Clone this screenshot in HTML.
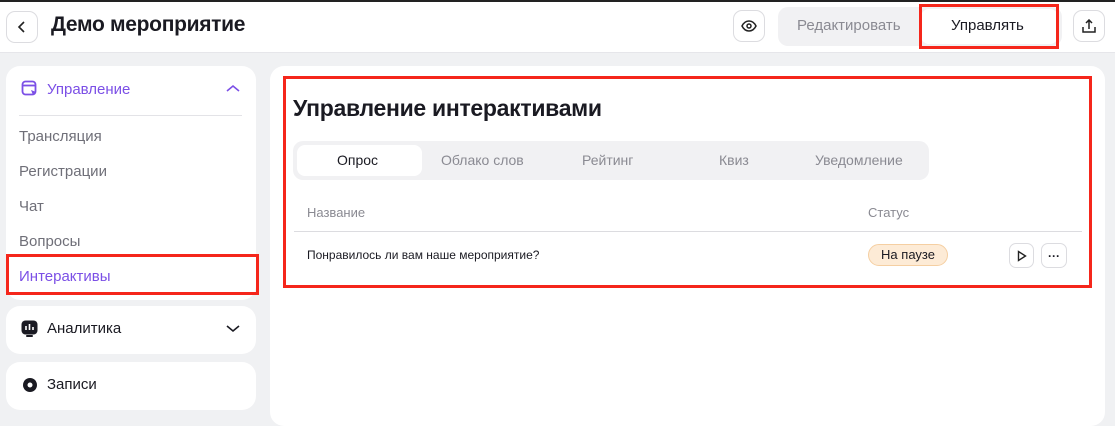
<!DOCTYPE html><html><head><meta charset="utf-8"><style>
*{box-sizing:border-box;margin:0;padding:0}
body{width:1115px;height:413px;overflow:hidden;background:#f0f1f3;font-family:"Liberation Sans",sans-serif;position:relative;color:#1a1a22}
.abs{position:absolute}
.top{left:0;top:0;width:1115px;height:2px;background:#222}
.hdr{left:0;top:2px;width:1115px;height:51px;background:#fff;border-bottom:1px solid #e6e6ea}
.btn{border:1px solid #dcdce0;border-radius:9px;background:#fff;display:flex;align-items:center;justify-content:center}
.card{background:#fff;border-radius:14px}
.red{border:3px solid #f5261b}
.item{left:19px;font-size:15px;color:#6f6f78}
</style></head><body>
<div class="abs top"></div>
<div class="abs hdr"></div>
<div class="abs btn" style="left:6px;top:11px;width:32px;height:32px"><svg width="14" height="14" viewBox="0 0 14 14"><path d="M9 2L4 7l5 5" fill="none" stroke="#222" stroke-width="1.6"/></svg></div>
<div class="abs" style="left:51px;top:13px;font-size:21px;font-weight:bold;letter-spacing:-0.3px">Демо мероприятие</div>
<div class="abs btn" style="left:733px;top:10px;width:32px;height:32px"><svg width="16" height="12" viewBox="0 0 16 12"><path d="M1 6C3 2 5.5 1 8 1s5 1 7 5c-2 4-4.5 5-7 5S3 10 1 6z" fill="none" stroke="#222" stroke-width="1.5"/><circle cx="8" cy="6" r="2" fill="none" stroke="#222" stroke-width="1.5"/></svg></div>
<div class="abs" style="left:778px;top:7px;width:284px;height:39px;background:#f1f1f3;border-radius:10px"></div>
<div class="abs" style="left:797px;top:17px;font-size:15px;color:#8a8a92">Редактировать</div>
<div class="abs" style="left:921px;top:9px;width:137px;height:35px;background:#fff;border-radius:8px"></div>
<div class="abs red" style="left:919px;top:4px;width:140px;height:45px"></div>
<div class="abs" style="left:951px;top:17px;font-size:15px;color:#1a1a22">Управлять</div>
<div class="abs btn" style="left:1073px;top:10px;width:32px;height:32px"><svg width="14" height="15" viewBox="0 0 14 15"><path d="M7 10V1M4 4l3-3 3 3M1 8v5h12V8" fill="none" stroke="#222" stroke-width="1.5"/></svg></div>

<div class="abs card" style="left:6px;top:66px;width:250px;height:234px"></div>
<svg class="abs" style="left:21px;top:80px" width="17" height="17" viewBox="0 0 17 17"><rect x="1.5" y="1.5" width="13" height="13" rx="3" fill="none" stroke="#7b4fe6" stroke-width="1.8"/><path d="M1.5 5.5h13" stroke="#7b4fe6" stroke-width="1.8"/><path d="M10 10l5 2-2 1-1 2z" fill="#7b4fe6"/></svg>
<div class="abs" style="left:47px;top:81px;font-size:15px;color:#7b4fe6">Управление</div>
<svg class="abs" style="left:226px;top:84px" width="14" height="9" viewBox="0 0 14 9"><path d="M1 7l6-5 6 5" fill="none" stroke="#7b4fe6" stroke-width="1.6"/></svg>
<div class="abs" style="left:19px;top:115px;width:223px;height:1px;background:#e3e3e7"></div>
<div class="abs item" style="top:128px">Трансляция</div>
<div class="abs item" style="top:163px">Регистрации</div>
<div class="abs item" style="top:198px">Чат</div>
<div class="abs item" style="top:233px">Вопросы</div>
<div class="abs item" style="top:268px;color:#7b4fe6">Интерактивы</div>
<div class="abs red" style="left:6px;top:254px;width:253px;height:41px"></div>

<div class="abs card" style="left:6px;top:306px;width:250px;height:48px"></div>
<svg class="abs" style="left:21px;top:320px" width="17" height="18" viewBox="0 0 17 18"><rect x="0.5" y="0.5" width="16" height="14" rx="4" fill="#1a1a22"/><rect x="5" y="15" width="7" height="2" rx="1" fill="#1a1a22"/><path d="M5 10V6M8.5 10V4M12 10V7" stroke="#fff" stroke-width="1.6"/></svg>
<div class="abs" style="left:47px;top:320px;font-size:15px">Аналитика</div>
<svg class="abs" style="left:226px;top:324px" width="14" height="9" viewBox="0 0 14 9"><path d="M1 2l6 5 6-5" fill="none" stroke="#1a1a22" stroke-width="1.6"/></svg>
<div class="abs card" style="left:6px;top:362px;width:250px;height:48px"></div>
<svg class="abs" style="left:22px;top:377px" width="16" height="16" viewBox="0 0 16 16"><circle cx="8" cy="8" r="7" fill="#1a1a22"/><circle cx="8" cy="8" r="2.5" fill="#fff"/></svg>
<div class="abs" style="left:47px;top:376px;font-size:15px">Записи</div>

<div class="abs card" style="left:270px;top:66px;width:835px;height:360px"></div>
<div class="abs red" style="left:283px;top:76px;width:809px;height:212px"></div>
<div class="abs" style="left:293px;top:95px;font-size:23px;font-weight:bold;letter-spacing:-0.3px">Управление интерактивами</div>
<div class="abs" style="left:293px;top:141px;width:636px;height:39px;background:#f1f1f3;border-radius:10px"></div>
<div class="abs" style="left:297px;top:145px;width:125px;height:31px;background:#fff;border-radius:8px"></div>
<div class="abs" style="left:337px;top:152px;font-size:14px">Опрос</div>
<div class="abs" style="left:441px;top:152px;font-size:14px;color:#8a8a92">Облако слов</div>
<div class="abs" style="left:582px;top:152px;font-size:14px;color:#8a8a92">Рейтинг</div>
<div class="abs" style="left:719px;top:152px;font-size:14px;color:#8a8a92">Квиз</div>
<div class="abs" style="left:815px;top:152px;font-size:14px;color:#8a8a92">Уведомление</div>
<div class="abs" style="left:307px;top:205px;font-size:13px;color:#8a8a92">Название</div>
<div class="abs" style="left:868px;top:205px;font-size:13px;color:#8a8a92">Статус</div>
<div class="abs" style="left:294px;top:231px;width:788px;height:1px;background:#dcdce0"></div>
<div class="abs" style="left:307px;top:248px;font-size:12px;color:#1a1a22">Понравилось ли вам наше мероприятие?</div>
<div class="abs" style="left:868px;top:244px;width:80px;height:22px;background:#fdebd6;border:1px solid #f5cfa2;border-radius:11px;font-size:13px;text-align:center;line-height:20px">На паузе</div>
<div class="abs btn" style="left:1009px;top:243px;width:25px;height:25px;border-radius:7px"><svg width="10" height="12" viewBox="0 0 10 12"><path d="M1.5 1.5v9l7-4.5z" fill="none" stroke="#222" stroke-width="1.4"/></svg></div>
<div class="abs btn" style="left:1041px;top:243px;width:26px;height:25px;border-radius:7px;font-size:12px;font-weight:bold;line-height:10px">···</div>
</body></html>
